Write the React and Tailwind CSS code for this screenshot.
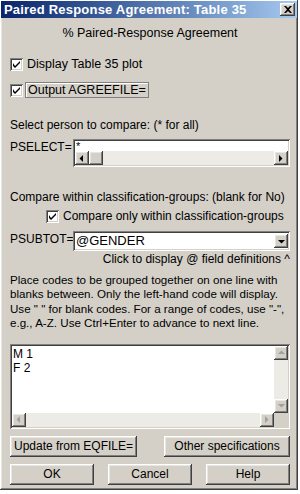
import React from "react";

const raised =
  "shadow-[inset_-1px_-1px_#404040,inset_1px_1px_#ffffff,inset_-2px_-2px_#808080,inset_2px_2px_#e8e6e0]";
const sunken =
  "shadow-[inset_1px_1px_#808080,inset_-1px_-1px_#ffffff,inset_2px_2px_#404040,inset_-2px_-2px_#d4d0c8]";

const Check = ({ className = "" }) => (
  <span className={`flex h-[13px] w-[13px] shrink-0 items-center justify-center bg-white ${sunken} ${className}`}>
    <svg width="7" height="7" viewBox="0 0 7 7">
      <path d="M0 2v3l2 2 5-5V-0L2 5z" fill="#000" />
    </svg>
  </span>
);

const ArrowBtn = ({ dir, disabled }) => {
  const c = disabled ? "#a0a0a0" : "#000";
  const paths = {
    left: "M5 1v7L1.5 4.5z",
    right: "M2 1v7l3.5-3.5z",
    up: "M1 6h7L4.5 2.5z",
    down: "M1 3h7L4.5 6.5z",
  };
  return (
    <div className={`flex h-[14px] w-[14px] shrink-0 items-center justify-center bg-[#d4d0c8] ${raised}`}>
      <svg width="9" height="9" viewBox="0 0 9 9">
        <path d={paths[dir]} fill={c} />
      </svg>
    </div>
  );
};

const Button = ({ children, className = "" }) => (
  <div className={`flex items-center justify-center bg-[#d4d0c8] text-black ${raised} ${className}`}>
    {children}
  </div>
);

export default function App() {
  return (
    <div className="h-[494px] w-[300px] bg-white font-['Liberation_Sans',Arial,sans-serif] text-[12px] leading-[14px] text-black">
      <div className={`flex h-[490px] w-[298px] flex-col bg-[#d4d0c8] ${raised}`}>
        {/* title bar */}
        <div className="mx-[1px] mt-[1px] flex h-[17px] items-center justify-between bg-gradient-to-r from-[#0a246a] to-[#a6caf0] pl-[3px] pr-[2px]">
          <span className="text-[13px] font-bold tracking-[0.2px] text-white">Paired Response Agreement: Table 35</span>
          <div className={`flex h-[13px] w-[15px] items-center justify-center bg-[#d4d0c8] ${raised}`}>
            <svg width="8" height="7" viewBox="0 0 8 7">
              <path d="M0 0h2l2 2 2-2h2L5 3.5 8 7H6L4 5 2 7H0l3-3.5z" fill="#000" />
            </svg>
          </div>
        </div>

        <div className="flex flex-col pl-[10px] pr-[8px]">
          <div className="mt-[8px] text-center text-[12.5px]">% Paired-Response Agreement</div>

          <div className="mt-[16px] flex h-[16px] items-center gap-[4px]">
            <Check />
            <span className="text-[12.5px]">Display Table 35 plot</span>
          </div>
          <div className="mt-[10px] flex h-[16px] items-center gap-[2px]">
            <Check />
            <span className="flex h-[16px] items-center border border-[#808080] px-[2px] text-[12.5px] shadow-[inset_1px_1px_#ffffff]">
              Output AGREEFILE=
            </span>
          </div>

          <div className="mt-[20px]">Select person to compare: (* for all)</div>

          <div className="mt-[7px] flex items-start">
            <span className="w-[63px] pt-[1px]">PSELECT=</span>
            <div className={`flex h-[28px] flex-1 flex-col bg-white p-[2px] ${sunken}`}>
              <div className="h-[10px] pl-[1px] text-[11px] leading-[11px]">*</div>
              <div className="flex h-[14px] bg-[#ecebe6]">
                <ArrowBtn dir="left" />
                <div className={`h-[14px] w-[14px] bg-[#d4d0c8] ${raised}`} />
                <div className="flex-1" />
                <ArrowBtn dir="right" />
              </div>
            </div>
          </div>

          <div className="mt-[23px]">Compare within classification-groups: (blank for No)</div>

          <div className="mt-[5px] ml-[36px] flex h-[14px] items-center gap-[4px]">
            <Check />
            <span>Compare only within classification-groups</span>
          </div>

          <div className="mt-[8px] flex items-start">
            <span className="w-[63px] pt-[1px]">PSUBTOT=</span>
            <div className={`flex h-[20px] flex-1 items-center bg-white p-[2px] ${sunken}`}>
              <span className="flex-1 pl-[1px] text-[13px]">@GENDER</span>
              <ArrowBtn dir="down" />
            </div>
          </div>

          <div className="mt-[1px] text-right">Click to display @ field definitions ^</div>

          <div className="mt-[7px] whitespace-nowrap text-[11.6px] leading-[14.4px]">
            Place codes to be grouped together on one line with
            <br />
            blanks between. Only the left-hand code will display.
            <br />
            Use &quot; &quot; for blank codes. For a range of codes, use &quot;-&quot;,
            <br />
            e.g., A-Z. Use Ctrl+Enter to advance to next line.
          </div>

          <div className={`mt-[13px] flex h-[85px] flex-col bg-white p-[2px] ${sunken}`}>
            <div className="flex flex-1">
              <div className="flex-1 pl-[1px] pt-[1px] text-[12px] leading-[14px]">
                <div>M 1</div>
                <div>F 2</div>
              </div>
              <div className="flex w-[14px] flex-col bg-[#ecebe6]">
                <ArrowBtn dir="up" disabled />
                <div className="flex-1" />
                <ArrowBtn dir="down" disabled />
              </div>
            </div>
            <div className="flex h-[14px]">
              <div className="flex flex-1 bg-[#ecebe6]">
                <ArrowBtn dir="left" disabled />
                <div className="flex-1" />
                <ArrowBtn dir="right" disabled />
              </div>
              <div className="w-[14px] bg-[#d4d0c8]" />
            </div>
          </div>

          <div className="mt-[7px] flex justify-between">
            <Button className="h-[21px] w-[127px]">Update from EQFILE=</Button>
            <Button className="h-[21px] w-[126px]">Other specifications</Button>
          </div>

          <div className="mt-[7px] flex justify-between">
            <Button className="h-[21px] w-[84px]">OK</Button>
            <Button className="h-[21px] w-[84px]">Cancel</Button>
            <Button className="h-[21px] w-[84px]">Help</Button>
          </div>
        </div>
      </div>
    </div>
  );
}
